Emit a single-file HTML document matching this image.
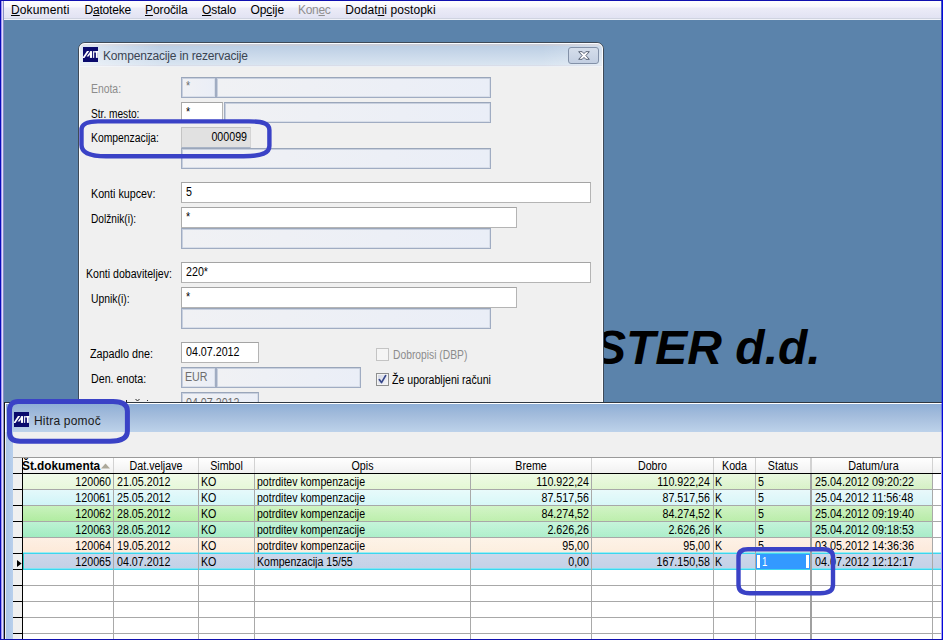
<!DOCTYPE html>
<html>
<head>
<meta charset="utf-8">
<title>Kompenzacije in rezervacije</title>
<style>
*{box-sizing:border-box;margin:0;padding:0}
html,body{width:943px;height:640px;overflow:hidden}
body{position:relative;background:#5b83ab;font-family:"Liberation Sans",sans-serif;font-size:11px;color:#000}
.abs{position:absolute}
/* outer window frame */
#fl0{left:0;top:0;width:2px;height:640px;background:linear-gradient(90deg,#0a0ab8 50%,#a29af0 50%)}
#fl1{left:2px;top:0;width:2px;height:640px;background:linear-gradient(90deg,#e6dcfa 50%,#8690c6 50%)}
#ft{left:0;top:0;width:943px;height:1px;background:#1010b0}
#fr{left:941px;top:0;width:2px;height:640px;background:linear-gradient(90deg,rgba(20,20,220,.35) 50%,#0606dc 50%)}
#fb{left:0;top:639px;width:943px;height:1px;background:#1010b0}
/* menu */
#menu{left:4px;top:1px;width:937px;height:19px;background:linear-gradient(#fefefe 0,#f7f7fc 33%,#ececf8 39%,#e2e3f3 94%,#d0d4e1 94.5%,#d0d4e1 100%);border-bottom:1px solid #f0f2f8;font-size:12px}
#menu span{position:absolute;top:2px;white-space:nowrap;line-height:14px}
#menu u{text-decoration:underline;text-underline-offset:1px}
/* big text */
#big{left:594px;top:320px;font-size:48px;font-weight:bold;font-style:italic;white-space:nowrap;line-height:56px;letter-spacing:0}
/* dialog */
#dlg{left:78px;top:42px;width:526px;height:400px;border:1px solid #3f4a57;border-radius:7px 7px 0 0;background:#f0f0f0;overflow:hidden}
#dlg .inner{position:absolute;left:0;top:0;right:0;bottom:0;border:1px solid #fafcff;border-radius:6px 6px 0 0}
#dtitle{left:1px;top:1px;right:1px;height:23px;background:linear-gradient(90deg,rgba(255,255,255,.5),rgba(255,255,255,0) 80px,rgba(255,255,255,0) calc(100% - 60px),rgba(255,255,255,.3)),linear-gradient(#c8ccd8 0,#c8ccd8 2px,#bccee4 2px,#d9e5f1 21px,#d9dde9 21px,#d9dde9 22px,#ecf0f5 22px,#ecf0f5 23px);border-radius:5px 5px 0 0}
#dtitle .t{position:absolute;left:23px;top:5px;font-size:12px;line-height:14px;color:#3a4452;white-space:nowrap;letter-spacing:-0.17px}
.icon{position:absolute;width:16px;height:15px;background:#0a0a6e}
#close{left:488px;top:3px;width:31px;height:17px;border:1px solid #8391a8;border-radius:3px;background:linear-gradient(#d5deeb,#c3cfe2)}
.lbl{position:absolute;white-space:nowrap;line-height:13px;font-size:12px;transform:scaleX(.875);transform-origin:0 0}
.sx{display:inline-block;font-size:12px;transform:scaleX(.89);transform-origin:0 0}
.sxr{display:inline-block;font-size:12px;transform:scaleX(.89);transform-origin:100% 0}
.gray{color:#8c8c8c}
.fd{position:absolute;height:21px;border:1px solid #a0acc2;border-top-color:#9aa6ba;box-shadow:inset 1px 1px 0 #c8d0df, inset -1px -1px 0 #d9dfea;background:linear-gradient(90deg,#f0f1f4,#eaeef7)}
.fw{position:absolute;height:21px;border:1px solid #b4b4b4;border-top-color:#a4a4a4;border-left-color:#acacac;background:#fff;padding:3px 0 0 4px;line-height:13px;white-space:nowrap}
.fd .tx{position:absolute;left:4px;top:2px;line-height:13px;color:#6d6d6d;white-space:nowrap;font-size:12px;transform:scaleX(.89);transform-origin:0 0}
/* bottom panel */
#pan{left:4px;top:402px;width:940px;height:240px;background:#f0f0f0;border-left:1px solid #101010;border-top:1px solid #2f3740}
#ptitle{left:0;top:0;width:939px;height:29px;border-top:1px solid #fff;border-left:1px solid #fff;background:linear-gradient(#8fafd6 0%,#a3bcdc 40%,#bdd2ea 100%)}
#ptitle .t{position:absolute;left:28px;top:10px;font-size:12px;line-height:14px;color:#1a1a1a;white-space:nowrap;letter-spacing:0.2px}
#pleft{left:1px;top:29px;width:7px;height:211px;background:linear-gradient(90deg,#a9c4e6,#b9d0ec)}
/* grid */
#grid{left:13px;top:457px;width:928px;height:182px;background:#fff;border-top:1px solid #9a9a9a;overflow:hidden}
#ghead{left:0;top:0;width:928px;height:15px;background:linear-gradient(#ffffff,#f1f1f1)}
#ghead div{position:absolute;top:1px;height:14px;line-height:14px;text-align:center;white-space:nowrap;font-size:12px;transform:scaleX(.89)}
.vl{position:absolute;top:0;width:1px;background:#b9b9b9}
.hl{position:absolute;left:0;width:928px;height:1px;background:#a8a8a8}
.row{position:absolute;left:10px;width:918px;height:15px}
.row div{position:absolute;top:1px;line-height:14px;white-space:nowrap;font-size:12px;transform:scaleX(.89);transform-origin:0 0}
.row div.r{text-align:right;transform-origin:100% 0}
</style>
</head>
<body>
<!-- MENU -->
<div id="menu" class="abs">
<span style="left:7px;letter-spacing:0.13px"><u>D</u>okumenti</span>
<span style="left:80.5px;letter-spacing:-0.2px">D<u>a</u>toteke</span>
<span style="left:141px;letter-spacing:-0.1px"><u>P</u>oročila</span>
<span style="left:198px;letter-spacing:-0.1px"><u>O</u>stalo</span>
<span style="left:246.4px;letter-spacing:-0.07px">Op<u>c</u>ije</span>
<span style="left:294px;letter-spacing:-0.3px;color:#8f8f8f">Kon<u>e</u>c</span>
<span style="left:341.3px;letter-spacing:0.06px">Dodat<u>n</u>i postopki</span>
</div>

<!-- BIG TEXT -->
<div id="big" class="abs">STER d.d.</div>

<!-- DIALOG -->
<div id="dlg" class="abs">
<div class="inner"></div>
<div id="dtitle" class="abs">
  <svg class="abs" style="left:3px;top:3px" width="16" height="15" viewBox="0 0 16 15"><rect x="0" y="0" width="15" height="15" fill="#0a0a6c"/><path d="M0 10.9 L0 9.95 L3.95 4.1 L6.2 4.1 L1.4 10.9 Z M3.6 9.6 L5.5 9.6 L6.9 7.7 L6.9 5 Z" fill="#fff"/><rect x="6.9" y="4.1" width="2.2" height="6.8" fill="#fff"/><rect x="10.1" y="4.1" width="1.1" height="6.8" fill="#fff"/><rect x="11.2" y="4.1" width="4.3" height="1.4" fill="#fff"/><rect x="12.9" y="4.1" width="1.9" height="6.8" fill="#fff"/></svg>
  <div class="t">Kompenzacije in rezervacije</div>
  <div id="close" class="abs"><svg class="abs" style="left:9px;top:3px" width="12" height="9" viewBox="0 0 12 9"><path d="M0.7 0.7 L4.2 0.7 L6 2.6 L7.8 0.7 L11.3 0.7 L7.9 4.5 L11.3 8.3 L7.8 8.3 L6 6.4 L4.2 8.3 L0.7 8.3 L4.1 4.5 Z" fill="#fdfdfe" stroke="#4a5568" stroke-width="0.9" stroke-linejoin="round"/></svg></div>
</div>
<!-- form -->
<div class="lbl gray" style="left:12px;top:40px;transform:scaleX(0.865)">Enota:</div>
<div class="fd" style="left:102px;top:34px;width:35px"><div class="tx">*</div></div>
<div class="fd" style="left:137px;top:34px;width:275px"></div>

<div class="lbl" style="left:12px;top:65px;transform:scaleX(0.844)">Str. mesto:</div>
<div class="fw" style="left:102px;top:59px;width:42px"><span class="sx">*</span></div>
<div class="fd" style="left:145px;top:59px;width:267px"></div>

<div class="lbl" style="left:12px;top:89px;transform:scaleX(0.864)">Kompenzacija:</div>
<div class="abs" id="komp" style="left:102px;top:84px;width:70px;height:21px;background:#e1e1e1;border:1px solid #c4c4c4;border-right-color:#d4d4d4;border-bottom-color:#a9b4c6;text-align:right;padding:3px 3px 0 0;line-height:13px"><span class="sxr">000099</span></div>
<div class="fd" style="left:102px;top:105px;width:310px"></div>

<div class="lbl" style="left:12px;top:145px;transform:scaleX(0.894)">Konti kupcev:</div>
<div class="fw" style="left:102px;top:139px;width:410px"><span class="sx">5</span></div>
<div class="lbl" style="left:12px;top:170px;transform:scaleX(0.847)">Dolžnik(i):</div>
<div class="fw" style="left:102px;top:164px;width:336px"><span class="sx">*</span></div>
<div class="fd" style="left:102px;top:185px;width:310px"></div>

<div class="lbl" style="left:7px;top:225px;transform:scaleX(0.882)">Konti dobaviteljev:</div>
<div class="fw" style="left:102px;top:219px;width:410px"><span class="sx">220*</span></div>
<div class="lbl" style="left:12px;top:250px;transform:scaleX(0.864)">Upnik(i):</div>
<div class="fw" style="left:102px;top:244px;width:336px"><span class="sx">*</span></div>
<div class="fd" style="left:102px;top:265px;width:310px"></div>

<div class="lbl" style="left:11px;top:305px;transform:scaleX(0.900)">Zapadlo dne:</div>
<div class="fw" style="left:102px;top:299px;width:78px"><span class="sx">04.07.2012</span></div>
<div class="lbl" style="left:12px;top:330px;transform:scaleX(0.890)">Den. enota:</div>
<div class="fd" style="left:102px;top:324px;width:35px"><div class="tx" style="top:3px;left:3px">EUR</div></div>
<div class="fd" style="left:137px;top:324px;width:145px"></div>
<div class="abs" style="left:47px;top:357px;width:1px;height:2px;background:#222"></div><svg class="abs" style="left:56px;top:355px" width="5" height="4"><path d="M0.5 1 L2.5 3 L4.5 1" stroke="#222" stroke-width="1" fill="none"/></svg><div class="abs" style="left:68px;top:357px;width:1px;height:1px;background:#333"></div>
<div class="fd" style="left:102px;top:349px;width:78px"><div class="tx" style="top:4px">04.07.2012</div></div>

<div class="abs" id="cb1" style="left:297px;top:305px;width:13px;height:13px;border:1px solid #c4c4c4;background:#f5f5f5"></div>
<div class="lbl gray" style="left:313.5px;top:306px;transform:scaleX(0.858)">Dobropisi (DBP)</div>
<div class="abs" id="cb2" style="left:297px;top:330px;width:13px;height:13px;border:1px solid #8e8f8f;background:linear-gradient(135deg,#d3d7e3,#f6f6fa);box-shadow:inset 0 0 0 1px #f4f4f4"><svg class="abs" style="left:0;top:0" width="11" height="11" viewBox="0 0 11 11"><path d="M2.3 5.6 L4.5 8.6 L8.6 1.6" fill="none" stroke="#36468a" stroke-width="1.7" stroke-linecap="round" stroke-linejoin="round"/></svg></div>
<div class="lbl" style="left:313px;top:331px;transform:scaleX(0.883)">Že uporabljeni računi</div>
</div>

<!-- BOTTOM PANEL -->
<div id="pan" class="abs">
<div id="ptitle" class="abs">
  <svg class="abs" style="left:8px;top:8px" width="16" height="15" viewBox="0 0 16 15"><rect x="0" y="0" width="15" height="15" fill="#0a0a6c"/><path d="M0 10.9 L0 9.95 L3.95 4.1 L6.2 4.1 L1.4 10.9 Z M3.6 9.6 L5.5 9.6 L6.9 7.7 L6.9 5 Z" fill="#fff"/><rect x="6.9" y="4.1" width="2.2" height="6.8" fill="#fff"/><rect x="10.1" y="4.1" width="1.1" height="6.8" fill="#fff"/><rect x="11.2" y="4.1" width="4.3" height="1.4" fill="#fff"/><rect x="12.9" y="4.1" width="1.9" height="6.8" fill="#fff"/></svg>
  <div class="t">Hitra pomoč</div>
</div>
<div id="pleft" class="abs"></div>
</div>

<div id="grid" class="abs">
<div id="ghead" class="abs"><div style="left:9px;width:90px;text-align:left;font-weight:bold;transform:scaleX(.985);transform-origin:0 0">Št.dokumenta</div><div style="left:101px;width:84px">Dat.veljave</div><div style="left:186px;width:55px">Simbol</div><div style="left:242px;width:215px">Opis</div><div style="left:458px;width:120px">Breme</div><div style="left:579px;width:121px">Dobro</div><div style="left:701px;width:41px">Koda</div><div style="left:743px;width:54px">Status</div><div style="left:799.5px;width:121px;transform:scaleX(.9)">Datum/ura</div><i style="position:absolute;left:100px;top:0;width:1px;height:15px;background:#d2d2d2"></i><i style="position:absolute;left:185px;top:0;width:1px;height:15px;background:#d2d2d2"></i><i style="position:absolute;left:241px;top:0;width:1px;height:15px;background:#d2d2d2"></i><i style="position:absolute;left:457px;top:0;width:1px;height:15px;background:#d2d2d2"></i><i style="position:absolute;left:578px;top:0;width:1px;height:15px;background:#d2d2d2"></i><i style="position:absolute;left:700px;top:0;width:1px;height:15px;background:#d2d2d2"></i><i style="position:absolute;left:742px;top:0;width:1px;height:15px;background:#d2d2d2"></i><i style="position:absolute;left:797px;top:0;width:2px;height:15px;background:#d2d2d2"></i><i style="position:absolute;left:919px;top:0;width:1px;height:15px;background:#d2d2d2"></i><svg class="abs" style="left:88px;top:5px" width="10" height="6"><path d="M0 5.5 L4.5 0.5 L9 5.5 Z" fill="#aca899"/></svg></div>
<div class="hl" style="top:15px;background:#000"></div>
<div class="row" style="top:16px;width:910px;background:linear-gradient(rgba(255,255,255,.42),rgba(255,255,255,0)),linear-gradient(90deg,#e8f8dc,#e4f8d4 48%,#d4f0c4)"><div class="r" style="left:0px;width:88px">120060</div><div style="left:93.5px">21.05.2012</div><div style="left:178px">KO</div><div style="left:233.5px;transform:scaleX(.88)">potrditev kompenzacije</div><div class="r" style="left:448px;width:118px">110.922,24</div><div class="r" style="left:569px;width:118px">110.922,24</div><div style="left:692px">K</div><div style="left:735px">5</div><div style="left:791.5px;transform:scaleX(.9)">25.04.2012 09:20:22</div></div>
<div class="row" style="top:32px;width:910px;background:linear-gradient(rgba(255,255,255,.42),rgba(255,255,255,0)),linear-gradient(90deg,#d0f4f8,#d8f8f8 48%,#d8f4f8)"><div class="r" style="left:0px;width:88px">120061</div><div style="left:93.5px">25.05.2012</div><div style="left:178px">KO</div><div style="left:233.5px;transform:scaleX(.88)">potrditev kompenzacije</div><div class="r" style="left:448px;width:118px">87.517,56</div><div class="r" style="left:569px;width:118px">87.517,56</div><div style="left:692px">K</div><div style="left:735px">5</div><div style="left:791.5px;transform:scaleX(.9)">25.04.2012 11:56:48</div></div>
<div class="row" style="top:48px;width:910px;background:linear-gradient(rgba(255,255,255,.3),rgba(255,255,255,0)),linear-gradient(90deg,#b0eca0,#c0f0b0 48%,#b8eca8)"><div class="r" style="left:0px;width:88px">120062</div><div style="left:93.5px">28.05.2012</div><div style="left:178px">KO</div><div style="left:233.5px;transform:scaleX(.88)">potrditev kompenzacije</div><div class="r" style="left:448px;width:118px">84.274,52</div><div class="r" style="left:569px;width:118px">84.274,52</div><div style="left:692px">K</div><div style="left:735px">5</div><div style="left:791.5px;transform:scaleX(.9)">25.04.2012 09:19:40</div></div>
<div class="row" style="top:64px;width:910px;background:linear-gradient(rgba(255,255,255,.3),rgba(255,255,255,0)),linear-gradient(90deg,#a0ecc0,#b0f0cc 48%,#a8ecc8)"><div class="r" style="left:0px;width:88px">120063</div><div style="left:93.5px">28.05.2012</div><div style="left:178px">KO</div><div style="left:233.5px;transform:scaleX(.88)">potrditev kompenzacije</div><div class="r" style="left:448px;width:118px">2.626,26</div><div class="r" style="left:569px;width:118px">2.626,26</div><div style="left:692px">K</div><div style="left:735px">5</div><div style="left:791.5px;transform:scaleX(.9)">25.04.2012 09:18:53</div></div>
<div class="row" style="top:80px;width:910px;background:linear-gradient(rgba(255,255,255,.3),rgba(255,255,255,0)),linear-gradient(90deg,#fde9d8,#fcefdf 48%,#fce9da)"><div class="r" style="left:0px;width:88px">120064</div><div style="left:93.5px">19.05.2012</div><div style="left:178px">KO</div><div style="left:233.5px;transform:scaleX(.88)">potrditev kompenzacije</div><div class="r" style="left:448px;width:118px">95,00</div><div class="r" style="left:569px;width:118px">95,00</div><div style="left:692px">K</div><div style="left:735px">5</div><div style="left:791.5px;transform:scaleX(.9)">03.05.2012 14:36:36</div></div>
<div class="row" style="top:96px;width:918px;background:linear-gradient(rgba(255,255,255,.14),rgba(255,255,255,0)),linear-gradient(90deg,#c3d0e6,#c4d1e7 48%,#c4d1e7)"><div class="r" style="left:0px;width:88px">120065</div><div style="left:93.5px">04.07.2012</div><div style="left:178px">KO</div><div style="left:233.5px;transform:scaleX(.88)">Kompenzacija 15/55</div><div class="r" style="left:448px;width:118px">0,00</div><div class="r" style="left:569px;width:118px">167.150,58</div><div style="left:692px">K</div><div style="left:791.5px;transform:scaleX(.9)">04.07.2012 12:12:17</div></div>
<div class="hl" style="top:31px"></div>
<div class="hl" style="top:47px"></div>
<div class="hl" style="top:63px"></div>
<div class="hl" style="top:79px"></div>
<div class="hl" style="top:95px"></div>
<div class="hl" style="top:111px"></div>
<div class="hl" style="top:127px"></div>
<div class="hl" style="top:143px"></div>
<div class="hl" style="top:159px"></div>
<div class="hl" style="top:175px"></div>
<div class="hl" style="top:191px"></div>
<div class="hl" style="top:94px;left:10px;background:rgba(120,235,248,.7)"></div><div class="hl" style="top:95px;left:10px;background:#3cd6ee"></div>
<div class="hl" style="top:111px;left:10px;background:#3cd6ee"></div><div class="hl" style="top:110px;left:10px;background:rgba(110,232,248,.8)"></div><div class="abs" style="left:10px;top:95px;width:1px;height:17px;background:#30ccc8"></div>
<div class="vl" style="left:100px;top:16px;height:166px;background:#a9a9a9"></div>
<div class="vl" style="left:185px;top:16px;height:166px;background:#a9a9a9"></div>
<div class="vl" style="left:241px;top:16px;height:166px;background:#a9a9a9"></div>
<div class="vl" style="left:457px;top:16px;height:166px;background:#a9a9a9"></div>
<div class="vl" style="left:578px;top:16px;height:166px;background:#a9a9a9"></div>
<div class="vl" style="left:700px;top:16px;height:166px;background:#a9a9a9"></div>
<div class="vl" style="left:742px;top:16px;height:166px;background:#a9a9a9"></div>
<div class="vl" style="left:797px;top:16px;height:166px;width:2px;background:#a0a0a0"></div>
<div class="vl" style="left:919px;top:16px;height:166px;background:#a9a9a9"></div>
<div class="abs" style="left:0;top:0;width:9px;height:182px;background:#f0f0f0"></div>
<div class="abs" style="left:0;top:15px;width:10px;height:1px;background:#000"></div>
<div class="abs" style="left:0;top:31px;width:10px;height:1px;background:#000"></div>
<div class="abs" style="left:0;top:47px;width:10px;height:1px;background:#000"></div>
<div class="abs" style="left:0;top:63px;width:10px;height:1px;background:#000"></div>
<div class="abs" style="left:0;top:79px;width:10px;height:1px;background:#000"></div>
<div class="abs" style="left:0;top:95px;width:10px;height:1px;background:#000"></div>
<div class="abs" style="left:0;top:111px;width:10px;height:1px;background:#000"></div>
<div class="abs" style="left:0;top:127px;width:10px;height:1px;background:#000"></div>
<div class="abs" style="left:0;top:143px;width:10px;height:1px;background:#000"></div>
<div class="abs" style="left:0;top:159px;width:10px;height:1px;background:#000"></div>
<div class="abs" style="left:0;top:175px;width:10px;height:1px;background:#000"></div>
<div class="abs" style="left:0;top:191px;width:10px;height:1px;background:#000"></div>
<div class="abs" style="left:9px;top:0;width:1px;height:182px;background:#000"></div>
<svg class="abs" style="left:4px;top:102px" width="5" height="7"><path d="M0 0 L4.6 3.5 L0 7 Z" fill="#000"/></svg>
<div class="abs" style="left:743px;top:96px;width:54px;height:15px;background:#3399ff"><div class="abs" style="left:1px;top:1px;width:3px;height:13px;background:#fff"></div><div class="abs" style="left:50px;top:1px;width:3px;height:13px;background:#fff"></div><div class="abs" style="left:5.5px;top:1px;line-height:14px;color:#fff;font-size:12px;transform:scaleX(.8);transform-origin:0 0">1</div></div>
</div>

<!-- ANNOTATIONS -->
<svg class="abs" style="left:0;top:0" width="943" height="640" viewBox="0 0 943 640" fill="none" stroke="#3a42c6" stroke-linejoin="round">
<path stroke-width="4.4" d="M98 121.4 L249 121.4 C262 121.4 269.4 123 269.4 130 L269.4 146 C269.4 153 262 156.3 243.6 156.3 L106 156.3 C91 156.3 81.5 153 81.5 145 L81.5 130 C81.5 124 88 121.4 98 121.4 Z"/>
<path stroke-width="5" d="M18 401.5 L113 401.5 C122 401.5 127.4 404 127.4 411 L127.4 431 C127.4 438 122 441.2 110 441.2 L20 441.2 C13 441.2 9.5 438.5 9.5 433 L9.5 410 C9.5 404.5 13 401.5 18 401.5 Z"/>
<path stroke-width="4.4" d="M748 549.3 L823 549.3 C829 549.3 833 551.5 833 557 L833 585 C833 590.5 829 593.3 820 593.3 L750 593.3 C742.5 593.3 738.5 590.5 738.5 585 L738.5 557 C738.5 551.5 742.5 549.3 748 549.3 Z"/>
</svg>
<!-- FRAME -->
<div id="fl0" class="abs"></div><div id="fl1" class="abs"></div><div id="ft" class="abs"></div><div id="fr" class="abs"></div><div id="fb" class="abs"></div>
</body>
</html>
